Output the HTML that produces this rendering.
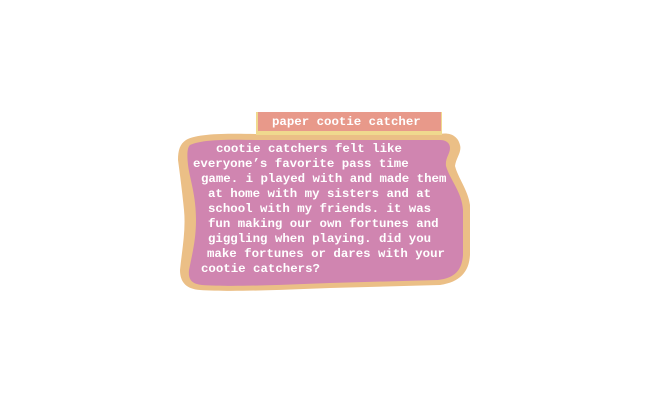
<!DOCTYPE html>
<html><head><style>
html,body{margin:0;padding:0;width:650px;height:400px;background:#fff;overflow:hidden}
.t{position:absolute;font-family:"Liberation Mono",monospace;font-weight:bold;font-size:12.4px;color:#fff;white-space:pre;line-height:15px}
</style></head><body>
<svg width="650" height="400" style="position:absolute;left:0;top:0">
<path fill="#ebbf86" d="M186,140 C200,132 240,134 262,134 L440,134 C450,132 458,136 460,145 C462,152 456,158 455,166 C458,178 468,190 470,205 L470,255 C469,272 460,282 440,285 L330,288 C280,290 230,292 200,290 C186,289 180,282 180,270 C182,250 186,230 184,210 C182,190 180,175 178,160 C178,150 180,144 186,140 Z"/>
<path fill="#d085b0" d="M190,145 C205,138 240,140 262,140 L440,140 C446,140 450,143 450,148 C450,154 445,158 446,166 C450,180 462,192 463,210 L463,255 C462,270 455,278 438,280 L330,283 C280,285 230,287 202,285 C192,284 188,280 189,270 C192,255 196,240 196,220 C196,195 190,180 188,165 C187,155 187,148 190,145 Z"/>
<rect x="256" y="112" width="186" height="23" fill="#f0d98e"/>
<rect x="258" y="112" width="183" height="19" fill="#e8998a"/>
</svg>
<div class="t" style="left:272px;top:115px">paper cootie catcher</div>
<div class="t" style="left:216px;top:142px">cootie catchers felt like</div>
<div class="t" style="left:193px;top:157px">everyone’s favorite pass time</div>
<div class="t" style="left:201px;top:172px">game. i played with and made them</div>
<div class="t" style="left:208px;top:187px">at home with my sisters and at</div>
<div class="t" style="left:208px;top:202px">school with my friends. it was</div>
<div class="t" style="left:208px;top:217px">fun making our own fortunes and</div>
<div class="t" style="left:208px;top:232px">giggling when playing. did you</div>
<div class="t" style="left:207px;top:247px">make fortunes or dares with your</div>
<div class="t" style="left:201px;top:262px">cootie catchers?</div>
</body></html>
